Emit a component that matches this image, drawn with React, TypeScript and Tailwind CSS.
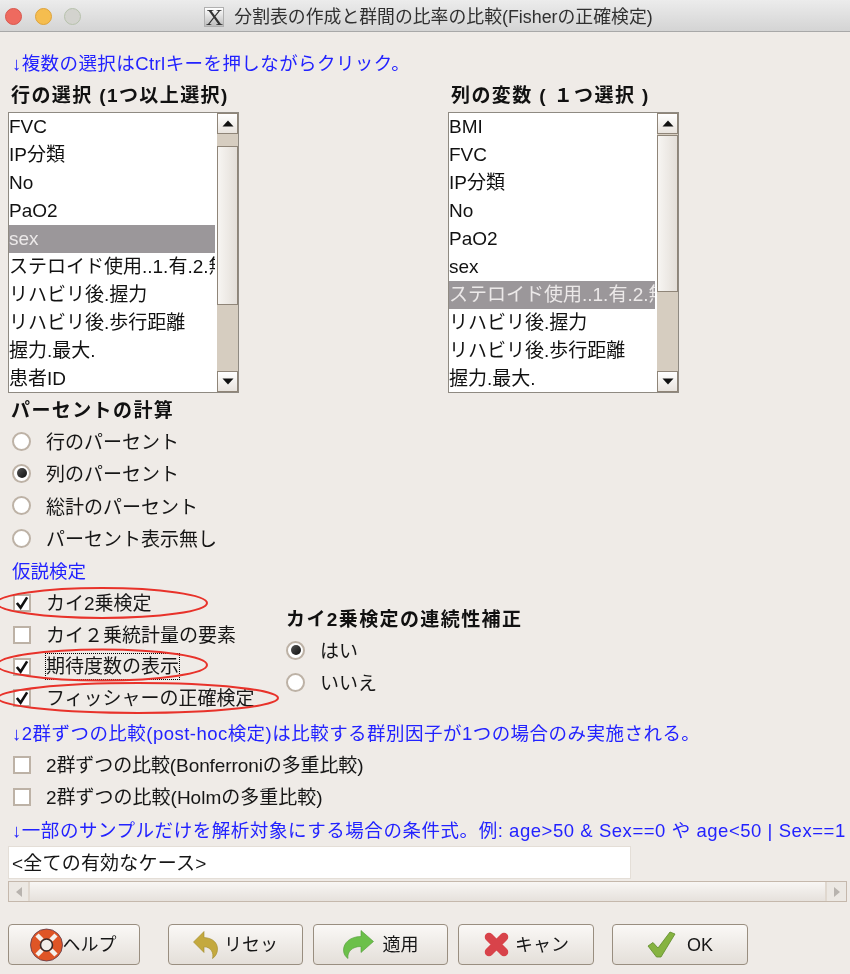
import React from "react";

const FONT = "font-['Liberation_Sans','Noto_Sans_CJK_JP',sans-serif]";

function Arrow({ dir }: { dir: "up" | "down" }) {
  return (
    <svg width="12" height="7" viewBox="0 0 12 7">
      <path d={dir === "up" ? "M6 0.5 L11.5 6.5 H0.5 Z" : "M0.5 0.5 H11.5 L6 6.5 Z"} fill="#111" />
    </svg>
  );
}

function ScrollBtn({ dir }: { dir: "up" | "down" }) {
  return (
    <div className="h-[21px] shrink-0 flex items-center justify-center bg-gradient-to-b from-white to-[#e9e4de] border border-[#8f8578]">
      <Arrow dir={dir} />
    </div>
  );
}

function ListBox({ items, selected, before, thumb, listW }: { items: string[]; selected: number; before: string; thumb: string; listW: string }) {
  return (
    <div className="w-[231px] h-[281px] flex border border-[#8f8a82] bg-white overflow-hidden">
      <div className={listW + " shrink-0 overflow-hidden"}>
        {items.map((t, i) => (
          <div
            key={t}
            className={
              "h-[28px] leading-[28px] whitespace-nowrap overflow-hidden text-[19px] " +
              (i === selected ? "bg-[#9b979a] text-[#ece9e9]" : "text-[#111]")
            }
          >
            {t}
          </div>
        ))}
      </div>
      <div className="flex-1 flex flex-col bg-[#d6cdc0] border-l-2 border-white">
        <ScrollBtn dir="up" />
        <div className={before + " shrink-0"} />
        <div className={thumb + " shrink-0 bg-gradient-to-r from-[#f7f5f2] to-[#e4dfd9] border border-[#8f8578]"} />
        <div className="flex-1" />
        <ScrollBtn dir="down" />
      </div>
    </div>
  );
}

function Radio({ label, on }: { label: string; on?: boolean }) {
  return (
    <div className="h-[32.3px] flex items-center pl-[4px]">
      <span className="w-[19px] h-[19px] rounded-full bg-white border-2 border-[#bdb2a6] flex items-center justify-center shrink-0">
        {on && <span className="w-[10px] h-[10px] rounded-full bg-gradient-to-br from-[#555] to-[#111]" />}
      </span>
      <span className="ml-[15px] pt-[4px] text-[19px] text-[#161616] whitespace-nowrap">{label}</span>
    </div>
  );
}

function Check({ label, on, focus, h = "h-[31.75px]", tight }: { label: string; on?: boolean; focus?: boolean; h?: string; tight?: boolean }) {
  return (
    <div className={h + " flex items-center pl-[5px]"}>
      <span className="w-[18px] h-[18px] bg-white border-2 border-[#bdb2a6] flex items-center justify-center shrink-0">
        {on && (
          <svg width="15" height="14" viewBox="0 0 15 14">
            <path d="M2 7 L6 12 L13 1" fill="none" stroke="#111" strokeWidth="2.8" />
          </svg>
        )}
      </span>
      {focus ? (
        <span className="ml-[14px] border border-dotted border-black text-[19px] leading-[25px] text-[#161616] whitespace-nowrap">{label}</span>
      ) : (
        <span className={"ml-[15px] pt-[2px] text-[19px] text-[#161616] whitespace-nowrap " + (tight ? "tracking-[-0.1px]" : "")}>{label}</span>
      )}
    </div>
  );
}

function Blue({ children, className = "" }: { children: React.ReactNode; className?: string }) {
  return (
    <div className={"h-[22px] leading-[24px] pl-[4px] text-[18.5px] text-[#2222ff] whitespace-nowrap " + className}>
      {children}
    </div>
  );
}

function Bold({ children, className = "" }: { children: React.ReactNode; className?: string }) {
  return (
    <div className={"h-[22px] leading-[24px] text-[19px] font-bold tracking-[1.4px] text-[#111] whitespace-nowrap " + className}>
      {children}
    </div>
  );
}

function Btn({ icon, label, className, gap }: { icon: React.ReactNode; label: string; className: string; gap: string }) {
  return (
    <div
      className={
        "h-[41px] flex items-center justify-center rounded-[4px] border border-[#998e80] bg-gradient-to-b from-[#faf8f6] to-[#e4dfd9] text-[18px] text-[#161616] " +
        gap + " " + className
      }
    >
      {icon}
      <span className="pt-[2px] whitespace-nowrap">{label}</span>
    </div>
  );
}

const LifeRing = (
  <svg width="33" height="34" viewBox="0 0 33 34">
    <circle cx="16.5" cy="17" r="11" fill="none" stroke="#df5526" strokeWidth="10" />
    <path d="M7 7 L12 12 M26 7 L21 12 M7 27 L12 22 M26 27 L21 22" stroke="#f4f1ec" strokeWidth="4.5" />
    <circle cx="16.5" cy="17" r="16" fill="none" stroke="#5a3a4a" strokeWidth="0.8" />
    <circle cx="16.5" cy="17" r="6" fill="#f2eeea" stroke="#3a2a28" strokeWidth="1.6" />
  </svg>
);
const Undo = (
  <svg width="25" height="28" viewBox="0 0 25 28">
    <path d="M0.5 11 L11 0.5 V6.5 C20 7 24.5 12 24.5 18 C24.5 22 22.5 25.5 19.5 27.5 C21 22 18 16 11 15.8 V21.5 Z" fill="#c4a93e" stroke="#a08a2a" strokeWidth="0.6" />
  </svg>
);
const Redo = (
  <svg width="31" height="29" viewBox="0 0 31 29">
    <path d="M30.5 11.5 L18 0.5 V6.5 C7 6.5 0.5 13 0.5 20 C0.5 23.5 2 26.5 5 28.5 C4 22 9 16.5 18 16.5 V22.5 Z" fill="#6cc04a" stroke="#4f9a35" strokeWidth="0.6" />
  </svg>
);
const Cross = (
  <svg width="27" height="27" viewBox="0 0 27 27">
    <path d="M6 6 L21 21 M21 6 L6 21" fill="none" stroke="#d8434a" strokeWidth="8.5" strokeLinecap="round" />
  </svg>
);
const Tick = (
  <svg width="29" height="27" viewBox="0 0 29 27">
    <path d="M1 15 L6 11.5 L11 17 L23 1 L28 3 L14 26 L9.5 26 Z" fill="#86b340" stroke="#5e8a2a" strokeWidth="0.8" strokeLinejoin="round" />
  </svg>
);

const leftItems = ["FVC", "IP分類", "No", "PaO2", "sex", "ステロイド使用..1.有.2.無", "リハビリ後.握力", "リハビリ後.歩行距離", "握力.最大.", "患者ID"];
const rightItems = ["BMI", "FVC", "IP分類", "No", "PaO2", "sex", "ステロイド使用..1.有.2.無", "リハビリ後.握力", "リハビリ後.歩行距離", "握力.最大."];

export default function App() {
  return (
    <div className={"relative w-[850px] h-[974px] overflow-hidden bg-[#efebe7] blur-[0.4px] " + FONT}>
      <div className="relative h-[32px] flex items-center justify-center bg-gradient-to-b from-[#ececec] to-[#d4d4d4] border-b border-[#a8a8a8]">
        <div className="absolute left-[5px] top-[8px] flex gap-[12.5px]">
          <span className="w-[17px] h-[17px] rounded-full bg-[#ee6a5f] border border-[#d9574d]" />
          <span className="w-[17px] h-[17px] rounded-full bg-[#f5bd4f] border border-[#dea33a]" />
          <span className="w-[17px] h-[17px] rounded-full bg-[#d3d3ce] border border-[#b7c2ac]" />
        </div>
        <div className="flex items-center pl-[7px]">
          <span className="w-[20px] h-[20px] mt-[4px] mr-[10px] bg-gradient-to-b from-white to-[#bdbdbd] border border-[#b0b0b0] flex items-center justify-center text-[24px] leading-none font-['Liberation_Serif'] text-[#333]">X</span>
          <span className="pt-[4px] text-[17.85px] text-[#303030] whitespace-nowrap">分割表の作成と群間の比率の比較(Fisherの正確検定)</span>
        </div>
      </div>

      <div className="px-[8px]">
        <Blue className="mt-[20px] tracking-[0.42px]">↓複数の選択はCtrlキーを押しながらクリック。</Blue>

        <div className="mt-[10px] grid grid-cols-[440px_1fr]">
          <div>
            <Bold className="pl-[3px] mb-[6px]">行の選択 (1つ以上選択)</Bold>
            <ListBox items={leftItems} selected={4} before="h-[12px]" thumb="h-[159px]" listW="w-[206px]" />
          </div>
          <div>
            <Bold className="pl-[3px] mb-[6px]">列の変数 ( １つ選択 )</Bold>
            <ListBox items={rightItems} selected={6} before="h-[1px]" thumb="h-[157px]" listW="w-[206px]" />
          </div>
        </div>

        <Bold className="mt-[6px] pl-[3px]">パーセントの計算</Bold>
        <div className="mt-[4px]">
          <Radio label="行のパーセント" />
          <Radio label="列のパーセント" on />
          <Radio label="総計のパーセント" />
          <Radio label="パーセント表示無し" />
        </div>

        <Blue className="mt-[6px]">仮説検定</Blue>

        <div className="mt-[5px] flex">
          <div className="w-[278px]">
            <Check label="カイ2乗検定" on />
            <Check label="カイ２乗統計量の要素" />
            <Check label="期待度数の表示" on focus />
            <Check label="フィッシャーの正確検定" on />
          </div>
          <div className="pt-[21px]">
            <Bold>カイ2乗検定の連続性補正</Bold>
            <div className="mt-[4px] -ml-[4px]">
              <Radio label="はい" on />
              <Radio label="いいえ" />
            </div>
          </div>
        </div>

        <Blue className="mt-[8px] tracking-[0.47px]">↓2群ずつの比較(post-hoc検定)は比較する群別因子が1つの場合のみ実施される。</Blue>
        <div className="mt-[5px]">
          <Check h="h-[32px]" tight label="2群ずつの比較(Bonferroniの多重比較)" />
          <Check h="h-[32px]" label="2群ずつの比較(Holmの多重比較)" />
        </div>
        <Blue className="mt-[6px] tracking-[0.55px]">↓一部のサンプルだけを解析対象にする場合の条件式。例: age&gt;50 &amp; Sex==0 や age&lt;50 | Sex==1</Blue>

        <div className="mt-[5px] w-[623px] h-[33px] leading-[33px] bg-white border border-[#e4ded7] pl-[3px] text-[19px] tracking-[0.2px] text-[#161616]">
          &lt;全ての有効なケース&gt;
        </div>

        <div className="mt-[2px] w-[839px] h-[21px] flex border border-[#c5b8ac] bg-[#ece8e3]">
          <div className="w-[21px] flex items-center justify-center border-r-2 border-[#e0d8cf]">
            <svg width="6" height="10" viewBox="0 0 6 10"><path d="M6 0 V10 L0 5 Z" fill="#b8b3ae" /></svg>
          </div>
          <div className="flex-1 bg-gradient-to-b from-[#f8f6f4] to-[#e6e1dc]" />
          <div className="w-[21px] flex items-center justify-center border-l-2 border-[#e0d8cf]">
            <svg width="6" height="10" viewBox="0 0 6 10"><path d="M0 0 V10 L6 5 Z" fill="#b8b3ae" /></svg>
          </div>
        </div>

        <div className="mt-[22px] flex">
          <Btn icon={LifeRing} label="ヘルプ" gap="gap-0" className="w-[132px] pr-[2px]" />
          <Btn icon={Undo} label="リセッ" gap="gap-[6px]" className="w-[135px] ml-[28px]" />
          <Btn icon={Redo} label="適用" gap="gap-[9px]" className="w-[135px] ml-[10px]" />
          <Btn icon={Cross} label="キャン" gap="gap-[5px]" className="w-[136px] ml-[10px]" />
          <Btn icon={Tick} label="OK" gap="gap-[11px]" className="w-[136px] ml-[18px]" />
        </div>
      </div>

      <svg className="absolute left-0 top-0 pointer-events-none" width="850" height="974" viewBox="0 0 850 974">
        <ellipse cx="102" cy="603" rx="105" ry="15" fill="none" stroke="#e8322a" strokeWidth="2" />
        <ellipse cx="102" cy="665" rx="105" ry="15.5" fill="none" stroke="#e8322a" strokeWidth="2" />
        <ellipse cx="138" cy="698" rx="140" ry="15" fill="none" stroke="#e8322a" strokeWidth="2" />
      </svg>
    </div>
  );
}
